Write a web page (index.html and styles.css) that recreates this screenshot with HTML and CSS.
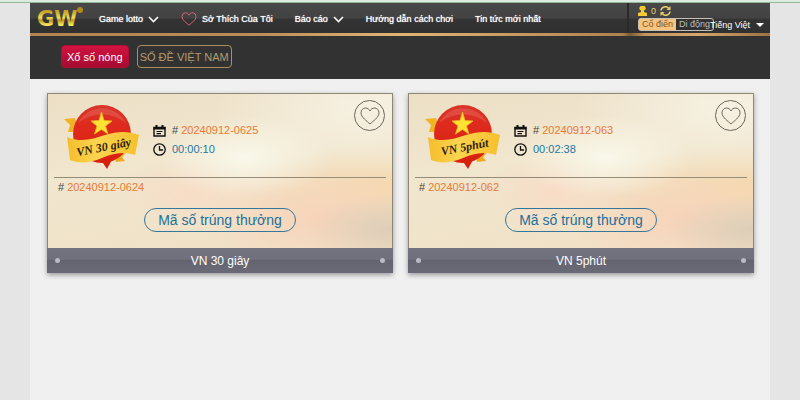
FILE: index.html
```html
<!DOCTYPE html>
<html lang="vi">
  <head>
    <meta charset="UTF-8" />
    <meta name="viewport" content="width=device-width, initial-scale=1.0" />
    <title>GW Lotto</title>
    <link rel="stylesheet" href="styles.css">
  </head>
  <body>
    <!-- shared shapes -->
    <svg class="defs" width="0" height="0" aria-hidden="true">
      <defs>
        <linearGradient id="gold" x1="0" y1="0" x2="0" y2="1">
          <stop offset="0.2" stop-color="#c9a526" />
          <stop offset="0.45" stop-color="#f3dc55" />
          <stop offset="0.55" stop-color="#b8961f" />
          <stop offset="0.75" stop-color="#f8e75c" />
        </linearGradient>
        <linearGradient id="ball" x1="0" y1="0" x2="0" y2="1">
          <stop offset="0" stop-color="#d9352b" />
          <stop offset="0.35" stop-color="#de2a1d" />
          <stop offset="1" stop-color="#d8200f" />
        </linearGradient>
        <linearGradient id="ribbon" x1="0" y1="0" x2="1" y2="0">
          <stop offset="0" stop-color="#f5bd2b" />
          <stop offset="0.4" stop-color="#fbd44f" />
          <stop offset="1" stop-color="#f6c02e" />
        </linearGradient>
        <symbol id="heart" viewBox="0 0 20 18">
          <path d="M10 17 C7 14 1 10.500 1 5.800 C1 3 3 1 5.500 1 C7.500 1 9.200 2.200 10 4 C10.800 2.200 12.500 1 14.500 1 C17 1 19 3 19 5.800 C19 10.500 13 14 10 17 Z" fill="none" stroke="currentColor" />
        </symbol>
        <symbol id="chevron" viewBox="0 0 11 7">
          <path d="M1 1 L5.500 5.500 L10 1" fill="none" stroke="currentColor" stroke-width="1.600" />
        </symbol>
        <symbol id="calendar" viewBox="0 0 13 12">
          <path d="M1 2.500 H12 V11 H1 Z" fill="none" stroke="currentColor" stroke-width="1.400" />
          <path d="M0.500 2 H12.500 V4.500 H0.500 Z M2.500 0 H4.500 V3 H2.500 Z M8.500 0 H10.500 V3 H8.500 Z" fill="currentColor" />
          <path d="M3.500 6.500 H9.500 M3.500 8.700 H8" stroke="currentColor" stroke-width="1.200" />
        </symbol>
        <symbol id="clock" viewBox="0 0 13 13">
          <circle cx="6.500" cy="6.500" r="5.700" fill="none" stroke="currentColor" stroke-width="1.300" />
          <path d="M6.500 3 V7 H10" fill="none" stroke="currentColor" stroke-width="1.300" />
        </symbol>
        <symbol id="badge" viewBox="0 0 76 66">
          <path d="M0 15 L11 14 L16 28 L4 28 L6 21 Z" fill="#f0b323" />
          <path d="M51 51 L62 49 L58 53 L61 57 L52 58 Z" fill="#edac20" />
          <circle cx="38" cy="30" r="29" fill="url(#ball)" />
          <path d="M37 56 L49 54 L43 65 Z" fill="#d8200f" />
          <path d="M14 19 A27 27 0 0 1 62 19 A38 38 0 0 0 14 19 Z" fill="#ea7b70" opacity="0.350" />
          <path d="M37.500 8 L40 16.500 L48 17 L41.500 22 L44 30 L37.500 25.500 L30.500 30 L33 22 L27 17 L35 16.500 Z" fill="#ffe234" stroke="#f0b61c" stroke-width="0.800" />
          <path d="M3 33 C17 39 29 35 41 31 C54 27 65 27 75 31 L71 51 C58 47 48 50 38 54 C26 59 15 60 6 56 Z" fill="url(#ribbon)" />
        </symbol>
      </defs>
    </svg>

    <div class="page">
      <header>
        <div class="topbar">
          <nav>
            <a class="logo" href="#" aria-label="GW">
              <svg width="46" height="22" viewBox="0 0 46 22">
                <text x="0" y="19" fill="url(#gold)">GW</text>
                <circle cx="43" cy="3" r="3" fill="#b18a1d" />
              </svg>
            </a>
            <button class="nav-item">Game lotto <svg width="11" height="7"><use href="#chevron" /></svg></button>
            <a class="nav-item liked" href="#"><svg width="16" height="14"><use href="#heart" /></svg>Sở Thích Của Tôi</a>
            <button class="nav-item">Báo cáo <svg width="11" height="7"><use href="#chevron" /></svg></button>
            <a class="nav-item" href="#">Hướng dẫn cách chơi</a>
            <a class="nav-item" href="#">Tin tức mới nhất</a>
          </nav>
          <div class="user">
            <div class="balance">
              <svg width="9" height="10" viewBox="0 0 9 10"><path d="M4.500 0 A2.300 2.300 0 0 1 6 4.500 V6 L9 7 V10 H0 V7 L3 6 V4.500 A2.300 2.300 0 0 1 4.500 0 Z" fill="#f3c832" /></svg>
              <span>0</span>
              <button aria-label="Làm mới">
                <svg width="11" height="10" viewBox="0 0 11 10"><path d="M1 4.500 A4.300 4.300 0 0 1 8.500 2.200 M10 5.500 A4.300 4.300 0 0 1 2.500 7.800" fill="none" stroke="#e8d06c" stroke-width="1.500" /><path d="M10.500 0 V4 H6.500 Z M0.500 10 V6 H4.500 Z" fill="#e8d06c" /></svg>
              </button>
            </div>
            <div class="options">
              <div class="view">
                <button class="active">Cổ điển</button>
                <button>Di động</button>
              </div>
              <label class="language">
                <select aria-label="Ngôn ngữ">
                  <option>Tiếng Việt</option>
                </select>
              </label>
            </div>
          </div>
        </div>
        <div class="tabs">
          <button class="tab selected">Xổ số nóng</button>
          <button class="tab">SỐ ĐỀ VIỆT NAM</button>
        </div>
      </header>

      <main>
        <article class="card">
          <div class="card-body">
            <div class="draw">
              <svg class="badge" width="76" height="66" viewBox="0 0 76 66">
                <use href="#badge" />
                <text x="40" y="47" text-anchor="middle" transform="rotate(-11 40 45)">VN 30 giây</text>
              </svg>
              <div class="info">
                <p><svg width="13" height="12"><use href="#calendar" /></svg><span># <b>20240912-0625</b></span></p>
                <p><svg width="13" height="13"><use href="#clock" /></svg><time>00:00:10</time></p>
              </div>
              <button class="like" aria-label="Yêu thích"><svg width="20" height="18"><use href="#heart" /></svg></button>
            </div>
            <p class="last"># <b>20240912-0624</b></p>
            <button class="result">Mã số trúng thưởng</button>
          </div>
          <h3>VN 30 giây</h3>
        </article>

        <article class="card">
          <div class="card-body">
            <div class="draw">
              <svg class="badge" width="76" height="66" viewBox="0 0 76 66">
                <use href="#badge" />
                <text x="40" y="47" text-anchor="middle" transform="rotate(-11 40 45)">VN 5phút</text>
              </svg>
              <div class="info">
                <p><svg width="13" height="12"><use href="#calendar" /></svg><span># <b>20240912-063</b></span></p>
                <p><svg width="13" height="13"><use href="#clock" /></svg><time>00:02:38</time></p>
              </div>
              <button class="like" aria-label="Yêu thích"><svg width="20" height="18"><use href="#heart" /></svg></button>
            </div>
            <p class="last"># <b>20240912-062</b></p>
            <button class="result">Mã số trúng thưởng</button>
          </div>
          <h3>VN 5phút</h3>
        </article>
      </main>
    </div>
  </body>
</html>
```
FILE: styles.css
```css
* {
  box-sizing: border-box;
}
body {
  margin: 0;
  padding: 0 30px;
  border-top: 2px solid #dcebdf;
  background-color: #e5e5e5;
  font-family: "Liberation Sans", Arial, sans-serif;
  font-size: 11px;
}
body::before {
  content: "";
  display: block;
  height: 1px;
  margin: 0 -30px;
  background-color: #93b798;
}
.defs {
  position: absolute;
}
button,
select {
  margin: 0;
  padding: 0;
  border: none;
  background: none;
  color: inherit;
  font: inherit;
  cursor: pointer;
}
a {
  color: inherit;
  text-decoration: none;
}
.page {
  min-height: calc(100vh - 3px);
  background-color: #f0f0f0;
}
header {
  background-color: #323232;
}
.topbar {
  display: flex;
  justify-content: space-between;
  height: 33px;
  border-bottom: 3px solid;
  border-image: linear-gradient(to right, #b18452, #b88d58 30%, #e0b573 50%, #ad8251 80%, #7c5a34 81%, #c39560 83%, #d5a76c 90%, #9c7244) 1;
  background: linear-gradient(#484848, #424242 50%, #333 55%, #303030);
  color: #fff;
  font-size: 9px;
}
nav {
  display: flex;
  align-items: center;
  gap: 22px;
  padding-left: 7px;
}
.logo {
  display: flex;
  margin-right: -6px;
}
.logo svg {
  overflow: visible;
}
.logo text {
  font: bold 21px "DejaVu Sans", sans-serif;
}
.nav-item {
  display: flex;
  align-items: center;
  gap: 5px;
  padding-top: 2px;
  text-shadow: 0 0 1px #fff;
  white-space: nowrap;
}
.liked svg {
  color: #ff6f88;
}
.user {
  display: flex;
  flex-direction: column;
  gap: 2px;
  width: 143px;
  padding: 2px 6px 0 9px;
  border-left: 2px solid #2a2a2a;
}
.balance {
  display: flex;
  align-items: center;
  gap: 4px;
  height: 11px;
  color: #e8d06c;
}
.balance button {
  display: flex;
}
.options {
  display: flex;
  justify-content: space-between;
  height: 13px;
}
.view {
  display: flex;
  border: 1px solid #c9c0b4;
  border-radius: 3px;
  color: #bdbdbd;
}
.view button {
  padding: 0 3px;
  line-height: 11px;
  white-space: nowrap;
}
.view .active {
  background-color: #f7c480;
  color: #80552a;
}
.language {
  display: flex;
  align-items: center;
  gap: 5px;
  margin-left: -4px;
}
.language select {
  appearance: none;
}
.language::after {
  content: "";
  border: 4px solid transparent;
  border-top-color: #fff;
  border-bottom: none;
}
.tabs {
  display: flex;
  gap: 8px;
  padding: 9px 31px 11px;
}
.tab {
  height: 23px;
  padding: 0 2px;
  border: 1px solid #a98f60;
  border-radius: 4px;
  color: #b79b6b;
}
.tab.selected {
  padding: 0 5px;
  border-color: #b30c35;
  background: linear-gradient(#d21340, #a60a32);
  color: #fff;
}
main {
  display: grid;
  grid-template-columns: 1fr 1fr;
  gap: 15px;
  padding: 14px 16px 14px 17px;
}
.card {
  box-shadow: 0 2px 5px #999;
}
.card-body {
  display: flex;
  flex-direction: column;
  padding: 0 6px 16px;
  border: 1px solid #8f8973;
  border-bottom: none;
  background:
    radial-gradient(ellipse at 57% 41%, #f9f8ea, transparent 32%),
    radial-gradient(ellipse at 92% 8%, #f6f1e2, transparent 34%),
    radial-gradient(ellipse at 100% 88%, #dccdb8, transparent 18%),
    radial-gradient(ellipse at 78% 80%, #f7d4ba, transparent 30%),
    radial-gradient(ellipse at 42% 64%, #f8dcc6, transparent 26%),
    radial-gradient(ellipse at 100% 62%, #f5d8ae, transparent 34%),
    linear-gradient(170deg, #ecdfc6, #f1e6ce 40%, #f0e4cb 65%, #f2dfc5);
}
.draw {
  display: flex;
  padding: 10px 1px 7px 10px;
  border-bottom: 1px solid #958c78;
}
.badge text {
  font: italic bold 12px "Liberation Serif", serif;
  fill: #30200c;
}
.info {
  display: flex;
  flex-direction: column;
  gap: 6px;
  padding: 20px 0 0 13px;
}
p {
  display: flex;
  align-items: center;
  gap: 6px;
  margin: 0;
  color: #444;
  line-height: 13px;
}
p svg {
  color: #111;
}
b {
  color: #e87a35;
  font-weight: normal;
}
time {
  color: #2278a5;
}
.like {
  display: flex;
  align-items: center;
  justify-content: center;
  width: 31px;
  height: 31px;
  margin: -4px 0 0 auto;
  border: 1px solid #6d675c;
  border-radius: 50%;
  color: #6d675c;
}
.last {
  gap: 3px;
  padding: 3px 4px 14px;
}
.result {
  align-self: center;
  height: 24px;
  padding: 0 13px;
  border: 1px solid #33779c;
  border-radius: 12px;
  color: #22709c;
  font-size: 14px;
}
h3 {
  display: flex;
  align-items: center;
  justify-content: space-between;
  height: 25px;
  margin: 0;
  padding: 0 8px;
  background: linear-gradient(#737380, #70707e 45%, #646470 50%, #6b6b77);
  color: #fff;
  font-size: 12px;
  font-weight: normal;
}
h3::before,
h3::after {
  content: "";
  width: 5px;
  height: 5px;
  border-radius: 50%;
  background-color: #b9b9c8;
}
```
